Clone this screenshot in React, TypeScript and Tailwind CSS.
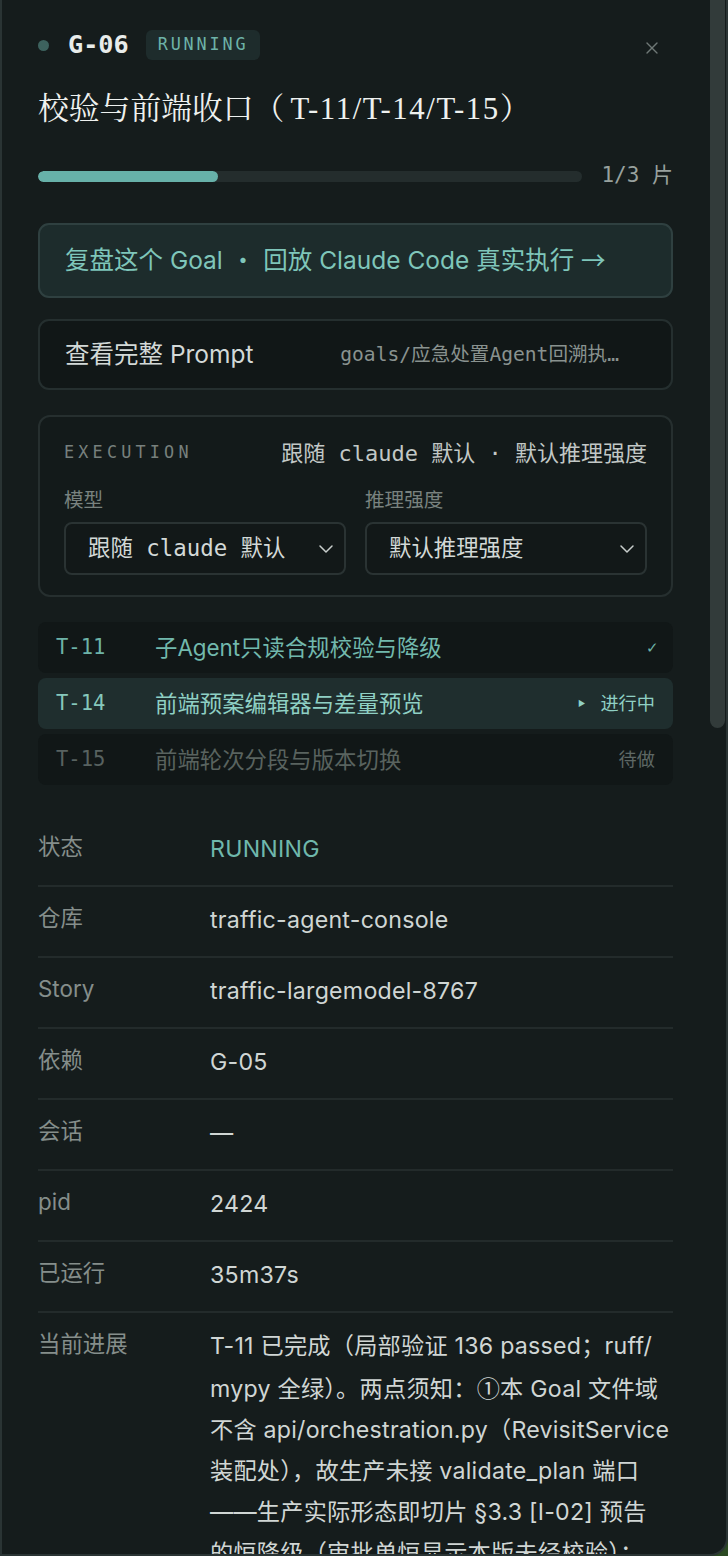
import { ChevronDown, X } from 'lucide-react'

const SANS = { fontFamily: 'Inter, "Noto Sans CJK SC", sans-serif' }
const CJK = { fontFamily: '"Noto Sans CJK SC", sans-serif' }
const MONO = { fontFamily: '"DejaVu Sans Mono", "Noto Sans CJK SC", monospace' }
const SERIF = { fontFamily: '"Liberation Serif", "Noto Serif CJK SC", "Noto Sans CJK SC", serif' }

const TASKS = [
  { id: 'T-11', title: '子Agent只读合规校验与降级', state: 'done' },
  { id: 'T-14', title: '前端预案编辑器与差量预览', state: 'running' },
  { id: 'T-15', title: '前端轮次分段与版本切换', state: 'todo' },
]

const DETAILS: { label: string; value: string; accent?: boolean }[] = [
  { label: '状态', value: 'RUNNING', accent: true },
  { label: '仓库', value: 'traffic-agent-console' },
  { label: 'Story', value: 'traffic-largemodel-8767' },
  { label: '依赖', value: 'G-05' },
  { label: '会话', value: '—' },
  { label: 'pid', value: '2424' },
  { label: '已运行', value: '35m37s' },
]

function TaskRow({ id, title, state }: { id: string; title: string; state: string }) {
  const running = state === 'running'
  const todo = state === 'todo'
  return (
    <div
      className={
        running
          ? 'flex h-[51px] items-center rounded-[8px] bg-[#1f2e2e] pl-[18px] pr-[18px]'
          : 'flex h-[51px] items-center rounded-[8px] bg-[#111717] pl-[18px] pr-[18px]'
      }
    >
      <span
        style={MONO}
        className={
          todo
            ? 'w-[99px] shrink-0 text-[20.5px] text-[#586260]'
            : running
              ? 'w-[99px] shrink-0 text-[20.5px] text-[#86c8bc]'
              : 'w-[99px] shrink-0 text-[20.5px] text-[#6db3a8]'
        }
      >
        {id}
      </span>
      <span
        style={SANS}
        className={
          todo
            ? 'flex-1 text-[22.4px] text-[#59635f]'
            : running
              ? 'flex-1 text-[22.4px] text-[#8fd0c4]'
              : 'flex-1 text-[22.4px] text-[#72b9ad]'
        }
      >
        {title}
      </span>
      {state === 'done' && <span className="mr-[-4px] text-[15px] text-[#6db3a8]">✓</span>}
      {running && (
        <span style={SANS} className="flex items-center gap-[15px] text-[18.2px] text-[#8fd0c4]">
          <span className="text-[8px]">▶</span>
          进行中
        </span>
      )}
      {todo && (
        <span style={SANS} className="text-[18.2px] text-[#5e6865]">
          待做
        </span>
      )}
    </div>
  )
}

export default function App() {
  return (
    <div className="h-[1556px] w-[728px] overflow-hidden bg-[#2b4a22]">
      <div className="relative h-[1556px] overflow-hidden rounded-br-[18px] border-x-[2px] border-b-[2px] border-[#2a3434] bg-[#151c1c]">
        {/* scrollbar thumb */}
        <div className="absolute right-[1px] top-[-10px] h-[738px] w-[15px] rounded-full bg-[#323b3a]" />

        <div className="pl-[36px] pr-[53px] pt-[30px]">
          {/* Header */}
          <div className="flex h-[30px] items-center">
            <span className="h-[11px] w-[11px] shrink-0 rounded-full bg-[#3d625e]" />
            <span style={MONO} className="ml-[19px] text-[25.2px] font-bold text-[#e8ecea]">
              G-06
            </span>
            <span
              style={MONO}
              className="ml-[17px] flex h-[30px] items-center rounded-[6px] bg-[#1e2c2c] px-[12px] text-[16.8px] tracking-[0.17em] text-[#6db3a8]"
            >
              RUNNING
            </span>
            <span className="ml-auto mr-[6px] mt-[6px] flex w-[30px] justify-center text-[#6f7876]">
              <X size={20} strokeWidth={1.6} />
            </span>
          </div>

          {/* Title */}
          <h1 style={SERIF} className="mt-[29px] text-[30.8px] leading-[40px] text-[#eef1ef]">
            校验与前端收口（<span className="ml-[6px] tracking-[1.6px]">T-11/T-14/T-15</span>）
          </h1>

          {/* Progress */}
          <div className="mt-[35px] flex h-[24px] items-center gap-[19px]">
            <div className="h-[11px] flex-1 overflow-hidden rounded-full bg-[#242d2d]">
              <div className="h-full rounded-full bg-[#67b1a9]" style={{ width: '33%' }} />
            </div>
            <span style={MONO} className="text-[21px] text-[#98a19e]">
              1/3 片
            </span>
          </div>

          {/* Replay button */}
          <div
            style={SANS}
            className="mt-[35px] flex h-[75px] items-center rounded-[11px] border-[2px] border-[#2f4040] bg-[#1d2c2c] px-[25px] text-[24.5px] text-[#7fc6ba]"
          >
            <span className="whitespace-pre">复盘这个 Goal</span>
            <span style={CJK} className="mx-[8px]">
              ·
            </span>
            <span className="whitespace-pre">回放 Claude Code 真实执行 </span>
            <span style={CJK}>→</span>
          </div>

          {/* Prompt button */}
          <div className="mt-[21px] flex h-[71px] items-center justify-between rounded-[11px] border-[2px] border-[#252f2f] bg-[#111717] pl-[25px] pr-[52px]">
            <span style={SANS} className="text-[24.5px] text-[#d3d9d7]">
              查看完整 Prompt
            </span>
            <span style={MONO} className="text-[19.6px] text-[#89928f]">
              goals/应急处置Agent回溯执…
            </span>
          </div>

          {/* Execution */}
          <div className="mt-[25px] rounded-[12px] border-[2px] border-[#262f2f] bg-[#131a1a] px-[24px] pb-[20px] pt-[24px]">
            <div className="flex h-[24px] items-center justify-between">
              <span style={MONO} className="text-[16.8px] tracking-[0.25em] text-[#77807d]">
                EXECUTION
              </span>
              <span style={MONO} className="text-[22px] text-[#c2c8c6]">
                跟随 claude 默认 · 默认推理强度
              </span>
            </div>
            <div className="mt-[23px] grid grid-cols-2 gap-[19px]">
              {[
                { label: '模型', value: '跟随 claude 默认' },
                { label: '推理强度', value: '默认推理强度' },
              ].map((s) => (
                <div key={s.label}>
                  <div style={SANS} className="h-[24px] text-[19.6px] leading-[24px] text-[#79827f]">
                    {s.label}
                  </div>
                  <div className="mt-[10px] flex h-[53px] items-center justify-between rounded-[8px] border-[2px] border-[#2a3333] bg-[#121818] pl-[22px] pr-[6px]">
                    <span style={MONO} className="text-[22.4px] text-[#d3d9d7]">
                      {s.value}
                    </span>
                    <ChevronDown size={24} strokeWidth={1.5} className="text-[#c8cecc]" />
                  </div>
                </div>
              ))}
            </div>
          </div>

          {/* Tasks */}
          <div className="mt-[25px] flex flex-col gap-[5px]">
            {TASKS.map((t) => (
              <TaskRow key={t.id} {...t} />
            ))}
          </div>

          {/* Details */}
          <div style={SANS} className="mt-[31px]">
            {DETAILS.map((d) => (
              <div
                key={d.label}
                className="flex items-baseline border-b-[2px] border-[#232b2b] pb-[15px] pt-[13px]"
              >
                <span className="w-[172px] shrink-0 -translate-y-[2px] text-[22.4px] text-[#858e8b]">
                  {d.label}
                </span>
                <span
                  className={
                    d.accent
                      ? 'text-[23.2px] leading-[41px] tracking-[0.01em] text-[#6fb8ac]'
                      : 'text-[23.2px] leading-[41px] tracking-[0.01em] text-[#d0d6d4]'
                  }
                >
                  {d.value}
                </span>
              </div>
            ))}
            <div className="flex items-baseline pt-[13px]">
              <span className="w-[172px] shrink-0 -translate-y-[2px] text-[22.4px] text-[#858e8b]">
                当前进展
              </span>
              <div className="text-[23.2px] leading-[41px] tracking-[0.01em] text-[#d0d6d4] [&>div]:whitespace-nowrap">
                <div>T-11 已完成（局部验证 136 passed；ruff/</div>
                <div>
                  mypy 全绿）。两点须知：<span style={CJK}>①</span>本 Goal 文件域
                </div>
                <div>不含 api/orchestration.py（RevisitService</div>
                <div>装配处），故生产未接 validate_plan 端口</div>
                <div>——生产实际形态即切片 §3.3 [I-02] 预告</div>
                <div>的恒降级（审批单恒显示本版未经校验）；</div>
                <div>②T-14 前端预案编辑器进行中，差量预览</div>
                <div>依赖 G-05 产出的版本快照接口。</div>
              </div>
            </div>
          </div>
        </div>
      </div>
    </div>
  )
}
